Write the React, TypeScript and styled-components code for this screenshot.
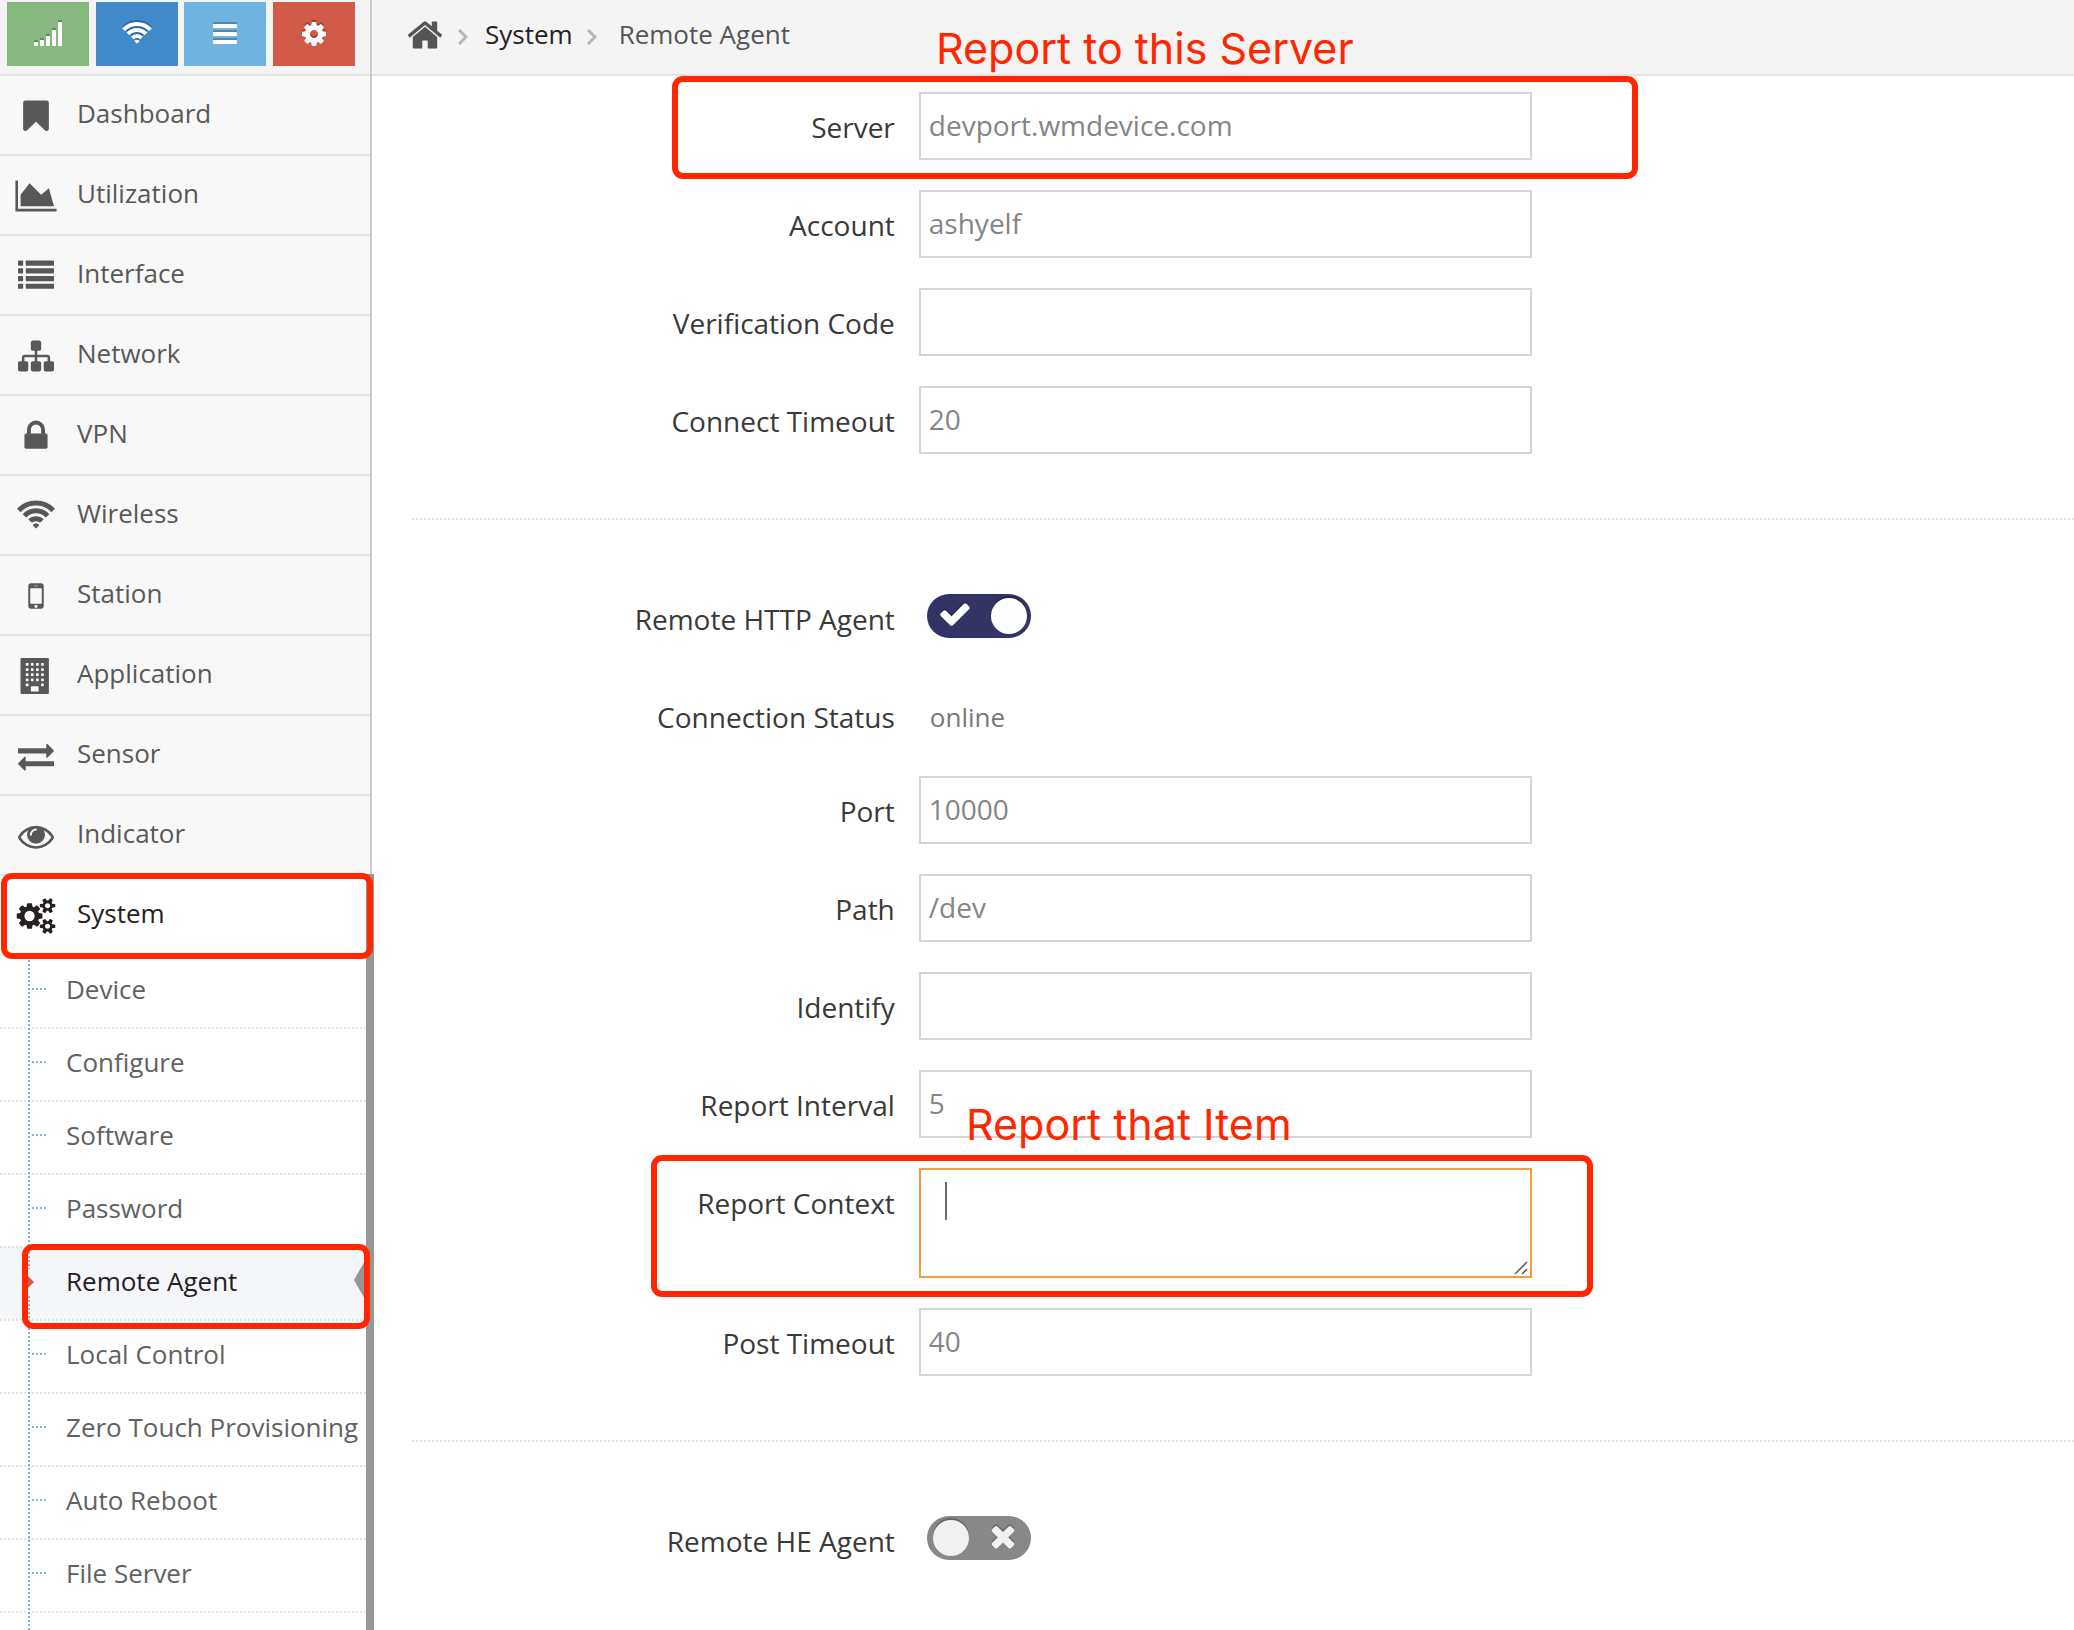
import React from "react";
import styled, { createGlobalStyle, css } from "styled-components";

const GlobalStyle = createGlobalStyle`
  *, *::before, *::after { box-sizing: border-box; }
  body { margin: 0; background: #fff; font-family: "Open Sans", "Noto Sans", sans-serif; }
  button, input, textarea { font-family: inherit; margin: 0; }
`;

const dots = (dir: string, color: string) =>
  `repeating-linear-gradient(to ${dir}, ${color} 0 2px, transparent 2px 4px)`;

/* ---------- icons ---------- */

const P = {
  bookmark:
    "M1420 128q23 0 44 9 33 13 52.5 41t19.5 62v1289q0 34-19.5 62t-52.5 41q-19 8-44 8-48 0-83-32l-441-424-441 424q-36 33-83 33-23 0-44-9-33-13-52.5-41t-19.5-62v-1289q0-34 19.5-62t52.5-41q21-9 44-9h1048z",
  area: "M1920 1536v128h-2048v-1536h128v1408h1920zm-384-1024l256 896h-1664v-576l448-576 576 576z",
  sitemap:
    "M1792 1248v320q0 40-28 68t-68 28h-320q-40 0-68-28t-28-68v-320q0-40 28-68t68-28h96v-192h-512v192h96q40 0 68 28t28 68v320q0 40-28 68t-68 28h-320q-40 0-68-28t-28-68v-320q0-40 28-68t68-28h96v-192h-512v192h96q40 0 68 28t28 68v320q0 40-28 68t-68 28h-320q-40 0-68-28t-28-68v-320q0-40 28-68t68-28h96v-192q0-52 38-90t90-38h512v-192h-96q-40 0-68-28t-28-68v-320q0-40 28-68t68-28h320q40 0 68 28t28 68v320q0 40-28 68t-68 28h-96v192h512q52 0 90 38t38 90v192h96q40 0 68 28t28 68z",
  lock: "M640 768h512v-192q0-106-75-181t-181-75-181 75-75 181v192zm832 96v576q0 40-28 68t-68 28h-960q-40 0-68-28t-28-68v-576q0-40 28-68t68-28h32v-192q0-184 132-316t316-132 316 132 132 316v192h32q40 0 68 28t28 68z",
  mobile:
    "M976 1408q0-33-23.5-56.5t-56.5-23.5-56.5 23.5-23.5 56.5 23.5 56.5 56.5 23.5 56.5-23.5 23.5-56.5zm208-160v-704q0-13-9.5-22.5t-22.5-9.5h-512q-13 0-22.5 9.5t-9.5 22.5v704q0 13 9.5 22.5t22.5 9.5h512q13 0 22.5-9.5t9.5-22.5zm-192-848q0-16-16-16h-160q-16 0-16 16t16 16h160q16 0 16-16zm288-16v1024q0 52-38 90t-90 38h-512q-52 0-90-38t-38-90v-1024q0-52 38-90t90-38h512q52 0 90 38t38 90z",
  exchange:
    "M1792 1184v192q0 13-9.5 22.5t-22.5 9.5h-1376v192q0 13-9.5 22.5t-22.5 9.5q-12 0-24-10l-319-320q-9-9-9-22 0-14 9-23l320-320q9-9 23-9 13 0 22.5 9.5t9.5 22.5v192h1376q13 0 22.5 9.5t9.5 22.5zm0-544q0 14-9 23l-320 320q-9 9-23 9-13 0-22.5-9.5t-9.5-22.5v-192h-1376q-13 0-22.5-9.5t-9.5-22.5v-192q0-13 9.5-22.5t22.5-9.5h1376v-192q0-14 9-23t23-9q12 0 24 10l319 319q9 9 9 23z",
  eye: "M1664 960q-152-236-381-353 61 104 61 225 0 185-131.5 316.5t-316.5 131.5-316.5-131.5-131.5-316.5q0-121 61-225-229 117-381 353 133 205 333.5 326.5t434.5 121.5 434.5-121.5 333.5-326.5zm-720-384q0-20-14-34t-34-14q-125 0-214.5 89.5t-89.5 214.5q0 20 14 34t34 14 34-14 14-34q0-86 61-147t147-61q20 0 34-14t14-34zm848 384q0 34-20 69-140 230-376.5 368.5t-499.5 138.5-499.5-139-376.5-368q-20-35-20-69t20-69q140-229 376.5-368t499.5-139 499.5 139 376.5 368q20 35 20 69z",
  cog: "M1152 896q0-106-75-181t-181-75-181 75-75 181 75 181 181 75 181-75 75-181zm512-109v222q0 12-8 23t-20 13l-185 28q-19 54-39 91 35 50 107 138 10 12 10 25t-9 23q-27 37-99 108t-94 71q-12 0-26-9l-138-108q-44 23-91 38-16 136-29 186-7 28-36 28h-222q-14 0-24.5-8.5t-11.5-21.5l-28-184q-49-16-90-37l-141 107q-10 9-25 9-14 0-25-11-126-114-165-168-7-10-7-23 0-12 8-23 15-21 51-66.5t54-70.5q-27-50-41-99l-183-27q-13-2-21-12.5t-8-23.5v-222q0-12 8-23t19-13l186-28q14-46 39-92-40-57-107-138-10-12-10-24 0-10 9-23 26-36 98.5-107.5t94.5-71.5q13 0 26 10l138 107q44-23 91-38 16-136 29-186 7-28 36-28h222q14 0 24.5 8.5t11.5 21.5l28 184q49 16 90 37l142-107q9-9 24-9 13 0 25 10 129 119 165 170 7 8 7 22 0 12-8 23-15 21-51 66.5t-54 70.5q26 50 41 98l183 28q13 2 21 12.5t8 23.5z",
  cogs: "M896 896q0-106-75-181t-181-75-181 75-75 181 75 181 181 75 181-75 75-181zm768 512q0-52-38-90t-90-38-90 38-38 90q0 53 37.5 90.5t90.5 37.5 90.5-37.5 37.5-90.5zm0-1024q0-52-38-90t-90-38-90 38-38 90q0 53 37.5 90.5t90.5 37.5 90.5-37.5 37.5-90.5zm-384 421v185q0 10-7 19.5t-16 10.5l-155 24q-11 35-32 76 34 48 90 115 7 11 7 20 0 12-7 19-23 30-82.5 89.5t-78.5 59.5q-11 0-21-7l-115-90q-37 19-77 31-11 108-23 155-7 24-30 24h-186q-11 0-20-7.5t-10-17.5l-23-153q-34-10-75-31l-118 89q-7 7-20 7-11 0-21-8-144-133-144-160 0-9 7-19 10-14 41-53t47-61q-23-44-35-82l-152-24q-10-1-17-9.5t-7-19.5v-185q0-10 7-19.5t16-10.5l155-24q11-35 32-76-34-48-90-115-7-11-7-20 0-12 7-20 22-30 82-89t79-59q11 0 21 7l115 90q34-18 77-32 11-108 23-154 7-24 30-24h186q11 0 20 7.5t10 17.5l23 153q34 10 75 31l118-89q8-7 20-7 11 0 21 8 144 133 144 160 0 8-7 19-12 16-42 54t-45 60q23 48 34 82l152 23q10 2 17 10.5t7 19.5zm640 533v140q0 16-149 31-12 27-30 52 51 113 51 138 0 4-4 7-122 71-124 71-8 0-46-47t-52-68q-20 2-30 2t-30-2q-14 21-52 68t-46 47q-2 0-124-71-4-3-4-7 0-25 51-138-18-25-30-52-149-15-149-31v-140q0-16 149-31 13-29 30-52-51-113-51-138 0-4 4-7 4-2 35-20t59-34 30-16q8 0 46 46.5t52 67.5q20-2 30-2t30 2q51-71 92-112l6-2q4 0 124 70 4 3 4 7 0 25-51 138 17 23 30 52 149 15 149 31zm0-1024v140q0 16-149 31-12 27-30 52 51 113 51 138 0 4-4 7-122 71-124 71-8 0-46-47t-52-68q-20 2-30 2t-30-2q-14 21-52 68t-46 47q-2 0-124-71-4-3-4-7 0-25 51-138-18-25-30-52-149-15-149-31v-140q0-16 149-31 13-29 30-52-51-113-51-138 0-4 4-7 4-2 35-20t59-34 30-16q8 0 46 46.5t52 67.5q20-2 30-2t30 2q51-71 92-112l6-2q4 0 124 70 4 3 4 7 0 25-51 138 17 23 30 52 149 15 149 31z",
  home: "M1472 992v480q0 26-19 45t-45 19h-384v-384h-256v384h-384q-26 0-45-19t-19-45v-480q0-1 .5-3t.5-3l575-474 575 474q1 2 1 6zm223-69l-62 74q-8 9-21 11h-3q-13 0-21-7l-692-577-692 577q-12 8-24 7-13-2-21-11l-62-74q-8-10-7-23.5t11-21.5l719-599q32-26 76-26t76 26l244 204v-195q0-14 9-23t23-9h192q14 0 23 9t9 23v408l219 182q10 8 11 21.5t-7 23.5z",
  check:
    "M1671 566q0 40-28 68l-724 724-136 136q-28 28-68 28t-68-28l-136-136-362-362q-28-28-28-68t28-68l136-136q28-28 68-28t68 28l294 295 656-657q28-28 68-28t68 28l136 136q28 28 28 68z",
  times:
    "M1490 1322q0 40-28 68l-136 136q-28 28-68 28t-68-28l-294-294-294 294q-28 28-68 28t-68-28l-136-136q-28-28-28-68t28-68l294-294-294-294q-28-28-28-68t28-68l136-136q28-28 68-28t68 28l294 294 294-294q28-28 68-28t68 28l136 136q28 28 28 68t-28 68l-294 294 294 294q28 28 28 68z",
};

const Svg = styled.svg<{ $size: number }>`
  display: block;
  flex: none;
  width: ${(p) => p.$size}px;
  height: ${(p) => p.$size}px;
  fill: currentColor;
  overflow: visible;
`;

type IconName = keyof typeof P | "list" | "wifi" | "building" | "signal" | "bars";

const wifiArc = (r: number) => {
  const s = r * 0.73;
  const c = r * 0.68;
  return `M${18 - s} ${28.6 - c}A${r} ${r} 0 0 1 ${18 + s} ${28.6 - c}`;
};

function Icon({ name, size = 36 }: { name: IconName; size?: number }) {
  if (name === "list")
    return (
      <Svg $size={size} viewBox="0 0 1792 1792" aria-hidden="true">
        {[128, 512, 896, 1280].map((y) => (
          <React.Fragment key={y}>
            <rect x="0" y={y} width="256" height="256" rx="32" />
            <rect x="384" y={y} width="1408" height="256" rx="32" />
          </React.Fragment>
        ))}
      </Svg>
    );
  if (name === "wifi")
    return (
      <Svg $size={size} viewBox="0 0 36 36" aria-hidden="true">
        <g fill="none" stroke="currentColor" strokeWidth="5">
          <path d={wifiArc(8)} />
          <path d={wifiArc(15.8)} />
          <path d={wifiArc(23.6)} />
        </g>
        <path d="M14.6 27Q18 23.6 21.4 27L18.6 30Q18 30.6 17.4 30Z" />
      </Svg>
    );
  if (name === "building")
    return (
      <Svg $size={size} viewBox="0 0 36 36" aria-hidden="true">
        <rect x="2.5" y="0" width="28.4" height="36" rx="1.2" />
        <g fill="#f8f8f8">
          {[5, 10.2, 15.3, 20.5, 25.6].map((y, row) =>
            [7.8, 12.9, 18, 23.1].map((x, col) =>
              row === 4 && (col === 1 || col === 2) ? null : (
                <rect key={`${x}-${y}`} x={x} y={y} width="2.7" height="2.7" rx="0.6" />
              )
            )
          )}
          <rect x="12.9" y="28.3" width="7.7" height="5.2" rx="0.6" />
        </g>
      </Svg>
    );
  if (name === "signal")
    return (
      <Svg $size={size} viewBox="0 0 28 28" aria-hidden="true">
        {[4, 6, 10, 16, 24].map((h, i) => (
          <rect key={h} x={i * 6} y={26 - h} width="4" height={h} rx="0.4" />
        ))}
      </Svg>
    );
  if (name === "bars")
    return (
      <Svg $size={size} viewBox="0 0 28 28" aria-hidden="true">
        {[4, 12, 20].map((y) => (
          <rect key={y} x="2" y={y} width="24" height="4" rx="1" />
        ))}
      </Svg>
    );
  const shift = name === "cogs" ? "translate(-64 0)" : undefined;
  return (
    <Svg $size={size} viewBox="0 0 1792 1792" aria-hidden="true">
      <path d={P[name]} transform={shift} />
    </Svg>
  );
}

/* ---------- annotations ---------- */

const Mark = styled.span<{ $top: number; $right: string; $bottom: number; $left: string }>`
  position: absolute;
  z-index: 5;
  top: ${(p) => p.$top}px;
  right: ${(p) => p.$right};
  bottom: ${(p) => p.$bottom}px;
  left: ${(p) => p.$left};
  border: 6px solid #ff2600;
  border-radius: 11px;
  pointer-events: none;
`;

const Note = styled.span<{ $left: number; $top: number }>`
  position: absolute;
  z-index: 6;
  left: ${(p) => p.$left}px;
  top: ${(p) => p.$top}px;
  color: #ff2600;
  font-family: Inter, "Liberation Sans", sans-serif;
  font-size: 43px;
  line-height: 56px;
  white-space: nowrap;
  pointer-events: none;
`;

/* ---------- sidebar ---------- */

const Page = styled.div`
  display: flex;
  min-height: 100vh;
`;

const Sidebar = styled.aside`
  display: flex;
  flex-direction: column;
  flex: none;
  width: 372px;
  background: #f8f8f8;
  border-right: 2px solid #ccc;
`;

const Shortcuts = styled.div`
  display: flex;
  justify-content: space-between;
  height: 74px;
  padding: 2px 15px 8px 7px;
  background: #f4f4f4;
`;

const Shortcut = styled.button<{ $color: string }>`
  display: flex;
  align-items: center;
  justify-content: center;
  width: 82px;
  height: 64px;
  padding: 0;
  border: 0;
  color: #fff;
  background: ${(p) => p.$color};
  cursor: pointer;

  svg {
    filter: drop-shadow(0 -2px 0 rgba(0, 0, 0, 0.25));
  }
`;

const Nav = styled.nav`
  display: flex;
  flex-direction: column;
  flex: 1;
`;

const List = styled.ul`
  margin: 0;
  padding: 0;
  list-style: none;
`;

const NavLink = styled.a<{ $open?: boolean }>`
  position: relative;
  display: flex;
  gap: 23px;
  height: 80px;
  padding: 19px 18px 0;
  border-top: 2px solid #e5e5e5;
  color: ${(p) => (p.$open ? "#262021" : "#585858")};
  background: ${(p) => (p.$open ? "#fff" : "transparent")};
  font-size: 26px;
  line-height: 36px;
  text-decoration: none;

  svg {
    margin-top: 3px;
  }
`;

const OpenGroup = styled.div`
  position: relative;
  display: flex;
  flex-direction: column;
  flex: 1;
  background: #fff;

  &::after {
    content: "";
    position: absolute;
    z-index: 2;
    top: 0;
    right: -4px;
    bottom: 0;
    width: 8px;
    background: #969696;
  }
`;

const Submenu = styled.ul`
  position: relative;
  flex: 1;
  margin: 0;
  padding: 0;
  list-style: none;

  &::before {
    content: "";
    position: absolute;
    z-index: 1;
    top: 6px;
    bottom: 0;
    left: 28px;
    width: 2px;
    background: ${dots("bottom", "#8cb3d4")};
  }
`;

const SubItem = styled.li<{ $first?: boolean; $active?: boolean }>`
  position: relative;
  height: 73px;
  padding-top: 2px;
  background-color: ${(p) => (p.$active ? "#f5f6fa" : "transparent")};
  background-image: ${(p) =>
    p.$first ? "linear-gradient(#e5e5e5, #e5e5e5)" : dots("right", "#e2e2e2")};
  background-size: 100% 2px;
  background-repeat: no-repeat;
`;

const SubLink = styled.a<{ $active?: boolean }>`
  display: block;
  height: 71px;
  padding: 15px 0 0 66px;
  color: ${(p) => (p.$active ? "#262021" : "#616161")};
  font-size: 26px;
  line-height: 36px;
  text-decoration: none;
  white-space: nowrap;

  &::before {
    content: "";
    position: absolute;
    top: 34px;
    left: 32px;
    width: 14px;
    height: 2px;
    background: ${(p) => (p.$active ? "none" : dots("right", "#8cb3d4"))};
  }
`;

const Marker = styled.svg`
  position: absolute;
  z-index: 1;
  top: 23px;
  left: 26px;
  width: 8px;
  height: 26px;
  background: #f5f6fa;
`;

const Pointer = styled.svg`
  position: absolute;
  z-index: 1;
  top: 13px;
  right: 4px;
  width: 12px;
  height: 42px;
`;

const SubTail = styled.li`
  height: 2px;
  background: ${dots("right", "#e2e2e2")};
`;

/* ---------- main ---------- */

const Main = styled.main`
  flex: 1;
  min-width: 0;
`;

const Breadcrumbs = styled.nav`
  position: relative;
  display: flex;
  height: 76px;
  padding: 16px 34px 0;
  background: #f4f4f4;
  border-bottom: 2px solid #e5e5e5;
  font-size: 26px;
  line-height: 36px;
  color: #555;
`;

const Crumb = styled.a`
  color: #262021;
  text-decoration: none;
`;

const HomeLink = styled.a`
  color: #555;
  height: 36px;
`;

const Chevron = styled.svg<{ $after: number }>`
  flex: none;
  width: 10px;
  height: 16px;
  margin: 13px ${(p) => p.$after}px 0 14px;
  fill: none;
  stroke: #b2b6bf;
  stroke-width: 3;
`;

const Form = styled.form`
  padding: 16px 0 0 40px;
`;

const Row = styled.div<{ $short?: boolean }>`
  position: relative;
  display: grid;
  grid-template-columns: 29.05% 36.9%;
  column-gap: 24px;
  align-items: start;
  min-height: ${(p) => (p.$short ? 64 : 68)}px;
  margin-bottom: 30px;
`;

const Label = styled.label`
  padding-top: 16px;
  color: #393939;
  font-size: 28px;
  line-height: 38px;
  text-align: right;
`;

const fieldBox = css`
  display: block;
  width: 100%;
  border: 2px solid #d5d5d5;
  border-radius: 0;
  outline: 0;
  background: #fff;
  color: #858585;
  font-size: 28px;
  line-height: 38px;
`;

const TextInput = styled.input`
  ${fieldBox}
  height: 68px;
  padding: 8px 8px 10px;
`;

const AreaWrap = styled.div`
  position: relative;
`;

const TextArea = styled.textarea`
  ${fieldBox}
  height: 110px;
  padding: 12px 8px;
  border-color: #f59942;
  resize: none;
`;

const Caret = styled.span`
  position: absolute;
  top: 14px;
  left: 26px;
  width: 2px;
  height: 38px;
  background: #696969;
`;

const Grip = styled.svg`
  position: absolute;
  right: 4px;
  bottom: 3px;
  width: 14px;
  height: 14px;
  fill: none;
  stroke: #666;
  stroke-width: 1.6;
`;

const Status = styled.output`
  padding: 17px 0 0 11px;
  color: #777;
  font-size: 26px;
  line-height: 36px;
`;

const SwitchWrap = styled.div<{ $on: boolean }>`
  position: relative;
  width: 104px;
  height: 44px;
  margin: 10px 0 0 8px;
  color: ${(p) => (p.$on ? "#fff" : "#f1f1f1")};

  svg {
    position: absolute;
    top: 3px;
    left: ${(p) => (p.$on ? 11 : 59)}px;
    pointer-events: none;
    filter: drop-shadow(0 -2px 0 rgba(0, 0, 0, 0.25));
  }
`;

const SwitchInput = styled.input`
  display: block;
  appearance: none;
  width: 104px;
  height: 44px;
  border-radius: 22px;
  background: #888;
  cursor: pointer;

  &::after {
    content: "";
    position: absolute;
    top: 4px;
    left: 6px;
    width: 36px;
    height: 36px;
    border-radius: 50%;
    background: #f1f1f1;
    box-shadow: 0 -2px 0 rgba(0, 0, 0, 0.25);
  }

  &:checked {
    background: #333366;
  }

  &:checked::after {
    left: 64px;
    background: #fff;
  }
`;

const Divider = styled.hr`
  height: 2px;
  margin: 64px 0;
  border: 0;
  background: ${dots("right", "#e2e2e2")};
`;

/* ---------- content ---------- */

const shortcuts: { icon: IconName; color: string; label: string }[] = [
  { icon: "signal", color: "#87b87f", label: "Signal" },
  { icon: "wifi", color: "#428bca", label: "Wireless status" },
  { icon: "bars", color: "#6fb3e0", label: "Menu" },
  { icon: "cog", color: "#d15b47", label: "Settings" },
];

const navItems: { icon: IconName; text: string }[] = [
  { icon: "bookmark", text: "Dashboard" },
  { icon: "area", text: "Utilization" },
  { icon: "list", text: "Interface" },
  { icon: "sitemap", text: "Network" },
  { icon: "lock", text: "VPN" },
  { icon: "wifi", text: "Wireless" },
  { icon: "mobile", text: "Station" },
  { icon: "building", text: "Application" },
  { icon: "exchange", text: "Sensor" },
  { icon: "eye", text: "Indicator" },
];

const subItems = [
  "Device",
  "Configure",
  "Software",
  "Password",
  "Remote Agent",
  "Local Control",
  "Zero Touch Provisioning",
  "Auto Reboot",
  "File Server",
];

function Field({ id, label, value = "", children }: { id: string; label: string; value?: string; children?: React.ReactNode }) {
  return (
    <Row>
      <Label htmlFor={id}>{label}</Label>
      <TextInput id={id} type="text" defaultValue={value} />
      {children}
    </Row>
  );
}

function Switch({ id, label, initial }: { id: string; label: string; initial: boolean }) {
  const [on, setOn] = React.useState(initial);
  return (
    <Row>
      <Label htmlFor={id}>{label}</Label>
      <SwitchWrap $on={on}>
        <SwitchInput id={id} type="checkbox" checked={on} onChange={(e) => setOn(e.target.checked)} />
        <Icon name={on ? "check" : "times"} size={34} />
      </SwitchWrap>
    </Row>
  );
}

const Separator = ({ after }: { after: number }) => (
  <Chevron $after={after} viewBox="0 0 10 16" aria-hidden="true">
    <path d="M1 1L8 8L1 15" />
  </Chevron>
);

export default function App() {
  return (
    <>
      <GlobalStyle />
      <Page>
        <Sidebar>
          <Shortcuts>
            {shortcuts.map((s) => (
              <Shortcut key={s.label} type="button" $color={s.color} aria-label={s.label}>
                <Icon name={s.icon} size={28} />
              </Shortcut>
            ))}
          </Shortcuts>
          <Nav aria-label="Main">
            <List>
              {navItems.map((n) => (
                <li key={n.text}>
                  <NavLink href="#">
                    <Icon name={n.icon} />
                    {n.text}
                  </NavLink>
                </li>
              ))}
            </List>
            <OpenGroup>
              <NavLink href="#" $open>
                <Icon name="cogs" />
                System
                <Mark $top={-3} $right="-3px" $bottom={-5} $left="1px" />
              </NavLink>
              <Submenu>
                {subItems.map((text, i) => {
                  const active = text === "Remote Agent";
                  return (
                    <SubItem key={text} $first={i === 0} $active={active}>
                      <SubLink href="#" $active={active} aria-current={active ? "page" : undefined}>
                        {text}
                      </SubLink>
                      {active && (
                        <>
                          <Marker viewBox="0 0 8 26" aria-hidden="true">
                            <path d="M1 6L8 13L1 20Z" fill="#c86139" />
                          </Marker>
                          <Pointer viewBox="0 0 12 42" aria-hidden="true">
                            <path d="M12 0L0 21L12 42Z" fill="#969696" />
                          </Pointer>
                          <Mark $top={-2} $right="0" $bottom={-10} $left="22px" />
                        </>
                      )}
                    </SubItem>
                  );
                })}
                <SubTail />
              </Submenu>
            </OpenGroup>
          </Nav>
        </Sidebar>
        <Main>
          <Breadcrumbs aria-label="Breadcrumb">
            <HomeLink href="#" aria-label="Home">
              <Icon name="home" size={38} />
            </HomeLink>
            <Separator after={17} />
            <Crumb href="#">System</Crumb>
            <Separator after={22} />
            <span>Remote Agent</span>
            <Note $left={564} $top={20}>Report to this Server</Note>
          </Breadcrumbs>
          <Form>
            <Field id="server" label="Server" value="devport.wmdevice.com">
              <Mark $top={-16} $right="436px" $bottom={-19} $left="260px" />
            </Field>
            <Field id="account" label="Account" value="ashyelf" />
            <Field id="code" label="Verification Code" />
            <Field id="connect-timeout" label="Connect Timeout" value="20" />
            <Divider />
            <Switch id="http-agent" label="Remote HTTP Agent" initial />
            <Row $short>
              <Label htmlFor="status">Connection Status</Label>
              <Status id="status">online</Status>
            </Row>
            <Field id="port" label="Port" value="10000" />
            <Field id="path" label="Path" value="/dev" />
            <Field id="identify" label="Identify" />
            <Field id="interval" label="Report Interval" value="5">
              <Note $left={554} $top={26}>Report that Item</Note>
            </Field>
            <Row>
              <Label htmlFor="context">Report Context</Label>
              <AreaWrap>
                <TextArea id="context" />
                <Caret />
                <Grip viewBox="0 0 14 14" aria-hidden="true">
                  <path d="M1 13L13 1M8 13L13 8" />
                </Grip>
              </AreaWrap>
              <Mark $top={-13} $right="481px" $bottom={-19} $left="239px" />
            </Row>
            <Field id="post-timeout" label="Post Timeout" value="40" />
            <Divider />
            <Switch id="he-agent" label="Remote HE Agent" initial={false} />
          </Form>
        </Main>
      </Page>
    </>
  );
}
